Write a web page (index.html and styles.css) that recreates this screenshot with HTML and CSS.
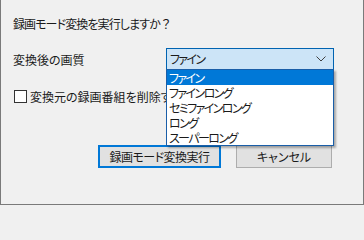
FILE: index.html
```html
<!DOCTYPE html>
<html lang="ja">
<head>
<meta charset="utf-8">
<link rel="stylesheet" href="styles.css">
</head>
<body>
<div class="dialog">
  <div class="title">録画モード変換を実行しますか<span class="qmark">？</span></div>
  <div class="quality-row">
    <div class="label">変換後の画質</div>
    <div class="combo">
      <span class="combo-text">ファイン</span>
      <svg class="chevron" width="10" height="6" viewBox="0 0 10 6"><path d="M0.5 0.5 L5 5 L9.5 0.5" fill="none" stroke="#404040" stroke-width="1"/></svg>
    </div>
  </div>
  <div class="check-row">
    <span class="checkbox"></span>
    <span class="check-label">変換元の録画番組を削除する</span>
  </div>
  <div class="buttons">
    <div class="btn btn-default">録画モード変換実行</div>
    <div class="btn">キャンセル</div>
  </div>
  <ul class="dropdown">
    <li class="item selected">ファイン</li>
    <li class="item">ファインロング</li>
    <li class="item">セミファインロング</li>
    <li class="item">ロング</li>
    <li class="item">スーパーロング</li>
  </ul>
</div>
</body>
</html>
```

FILE: styles.css
```css
html, body {
  margin: 0;
  padding: 0;
  background: #f0f0f0;
}

.dialog {
  position: relative;
  width: 364px;
  height: 205px;
  box-sizing: border-box;
  border: 1px solid #7a7a7a;
  border-top: none;
  background: #f0f0f0;
  padding: 16px 0 0 12px;
  font-family: "Noto Sans CJK JP", "Noto Sans", sans-serif;
  font-size: 12px;
  font-feature-settings: "palt";
  color: #1a1a1a;
  overflow: hidden;
}

.title {
  height: 16px;
  line-height: 16px;
  letter-spacing: -0.9px;
}

.qmark {
  font-feature-settings: normal;
  letter-spacing: 0;
}

.quality-row {
  display: flex;
  align-items: center;
  margin-top: 16px;
  height: 22px;
}

.label {
  width: 153px;
  line-height: 16px;
  padding-top: 1px;
}

.combo {
  width: 168px;
  height: 22px;
  box-sizing: border-box;
  border: 1px solid #0063b1;
  background: #cce4f7;
  display: flex;
  align-items: center;
  justify-content: space-between;
  padding: 0 7px 0 3px;
}

.combo-text {
  line-height: 16px;
  letter-spacing: -1.6px;
}

.chevron {
  display: block;
}

.check-row {
  display: flex;
  align-items: center;
  margin-top: 20px;
  height: 13px;
}

.checkbox {
  width: 13px;
  height: 13px;
  box-sizing: border-box;
  border: 1px solid #333;
  background: #fff;
  margin-left: 1px;
}

.check-label {
  margin-left: 3px;
  line-height: 16px;
  white-space: nowrap;
}

.buttons {
  display: flex;
  justify-content: flex-end;
  gap: 15px;
  margin-top: 42px;
  padding-right: 31px;
}

.btn {
  height: 23px;
  box-sizing: border-box;
  border: 1px solid #adadad;
  background: #e1e1e1;
  width: 96px;
  display: flex;
  align-items: center;
  justify-content: center;
  line-height: 16px;
}

.btn-default {
  width: 123px;
  border: 2px solid #0078d7;
  letter-spacing: -0.5px;
}

.dropdown {
  position: absolute;
  left: 165px;
  top: 69px;
  width: 168px;
  margin: 0;
  padding: 0;
  list-style: none;
  box-sizing: border-box;
  border: 1px solid #1a5ea8;
  background: #fff;
  box-shadow: 2px 2px 2px rgba(0, 0, 0, 0.3);
}

.item {
  height: 15px;
  line-height: 15px;
  padding-left: 2px;
  white-space: nowrap;
  letter-spacing: -1.6px;
}

.item.selected {
  background: #0078d7;
  color: #fff;
}
```
